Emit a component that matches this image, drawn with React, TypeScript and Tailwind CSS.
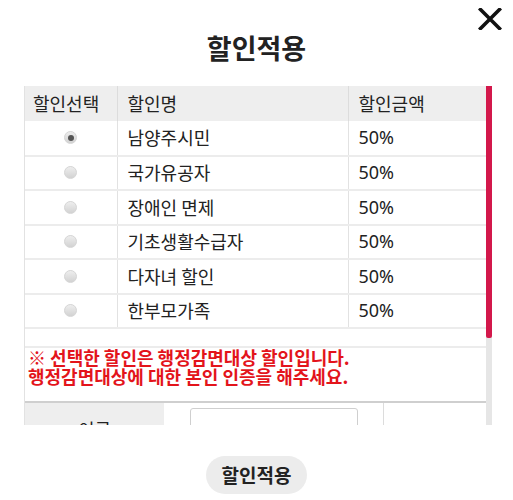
import React from 'react'

const rows = [
  { name: '남양주시민', rate: '50%', checked: true },
  { name: '국가유공자', rate: '50%' },
  { name: '장애인 면제', rate: '50%' },
  { name: '기초생활수급자', rate: '50%' },
  { name: '다자녀 할인', rate: '50%' },
  { name: '한부모가족', rate: '50%' },
]

function Radio({ checked }: { checked?: boolean }) {
  return (
    <span className="mx-auto flex h-[13px] w-[13px] items-center justify-center rounded-full border border-[#d6d6d6] bg-gradient-to-b from-[#eeeeee] to-[#d2d2d2]">
      {checked && <span className="h-[6px] w-[6px] rounded-full bg-[#555]" />}
    </span>
  )
}

export default function App() {
  return (
    <div className="relative h-[500px] w-[513px] bg-white text-[#222] font-['Noto_Sans_CJK_KR','Noto_Sans',sans-serif]">
      {/* close */}
      <button className="absolute right-[11px] top-[8px] h-[22px] w-[24px]" aria-label="닫기">
        <svg viewBox="0 0 24 22" className="h-[22px] w-[24px]">
          <path d="M2.5 1.5 L21.5 20.5 M21.5 1.5 L2.5 20.5" stroke="#111" strokeWidth="3.6" strokeLinecap="square" />
        </svg>
      </button>

      <h2 className="pt-[32px] text-center text-[27px] font-bold leading-[31px]">할인적용</h2>

      {/* scroll box */}
      <div className="ml-[24px] mt-[23px] flex h-[339px] w-[468px]">
        <div className="flex-1 overflow-hidden border-l border-[#e2e2e2]">
          <table className="w-full table-fixed border-collapse text-[18px]">
            <colgroup>
              <col className="w-[92px]" />
              <col className="w-[231px]" />
              <col />
            </colgroup>
            <thead>
              <tr className="h-[35px] bg-[#eeeeee]">
                <th className="border-r border-[#dcdcdc] pl-[8px] text-left font-normal">할인선택</th>
                <th className="border-r border-[#dcdcdc] pl-[10px] text-left font-normal">할인명</th>
                <th className="pl-[10px] text-left font-normal">할인금액</th>
              </tr>
            </thead>
            <tbody>
              {rows.map((r) => (
                <tr key={r.name} className="h-[34.5px] border-b-2 border-[#ececec]">
                  <td className="border-r border-[#e2e2e2]"><Radio checked={r.checked} /></td>
                  <td className="border-r border-[#e2e2e2] pl-[10px]">{r.name}</td>
                  <td className="pl-[10px] font-['Noto_Sans',sans-serif]">{r.rate}</td>
                </tr>
              ))}
              <tr className="h-[19px] border-b-2 border-[#ececec]">
                <td colSpan={3} />
              </tr>
            </tbody>
          </table>

          <div className="h-[55px] border-b-2 border-[#cfcfcf] pl-[3px] text-[18px] font-bold leading-[19px] text-[#e3141b]">
            <p>※ 선택한 할인은 행정감면대상 할인입니다.</p>
            <p>행정감면대상에 대한 본인 인증을 해주세요.</p>
          </div>

          <div className="flex h-[50px]">
            <div className="flex w-[139px] items-center justify-center bg-[#eeeeee] pt-[2px] text-[18px]">이름</div>
            <div className="w-[220px] border-r border-[#dcdcdc] pl-[26px] pt-[5px]">
              <div className="h-[34px] w-[168px] rounded-[3px] border border-[#cfcfcf]" />
            </div>
            <div className="flex-1" />
          </div>
        </div>

        {/* scrollbar */}
        <div className="w-[6px] bg-[#e6e6e6]">
          <div className="h-[252px] rounded-b-[2px] bg-[#d3184b]" />
        </div>
      </div>

      <button className="mx-auto mt-[31px] block h-[38px] w-[101px] rounded-full bg-[#ececec] text-[19px] font-bold leading-[38px]">
        할인적용
      </button>
    </div>
  )
}
